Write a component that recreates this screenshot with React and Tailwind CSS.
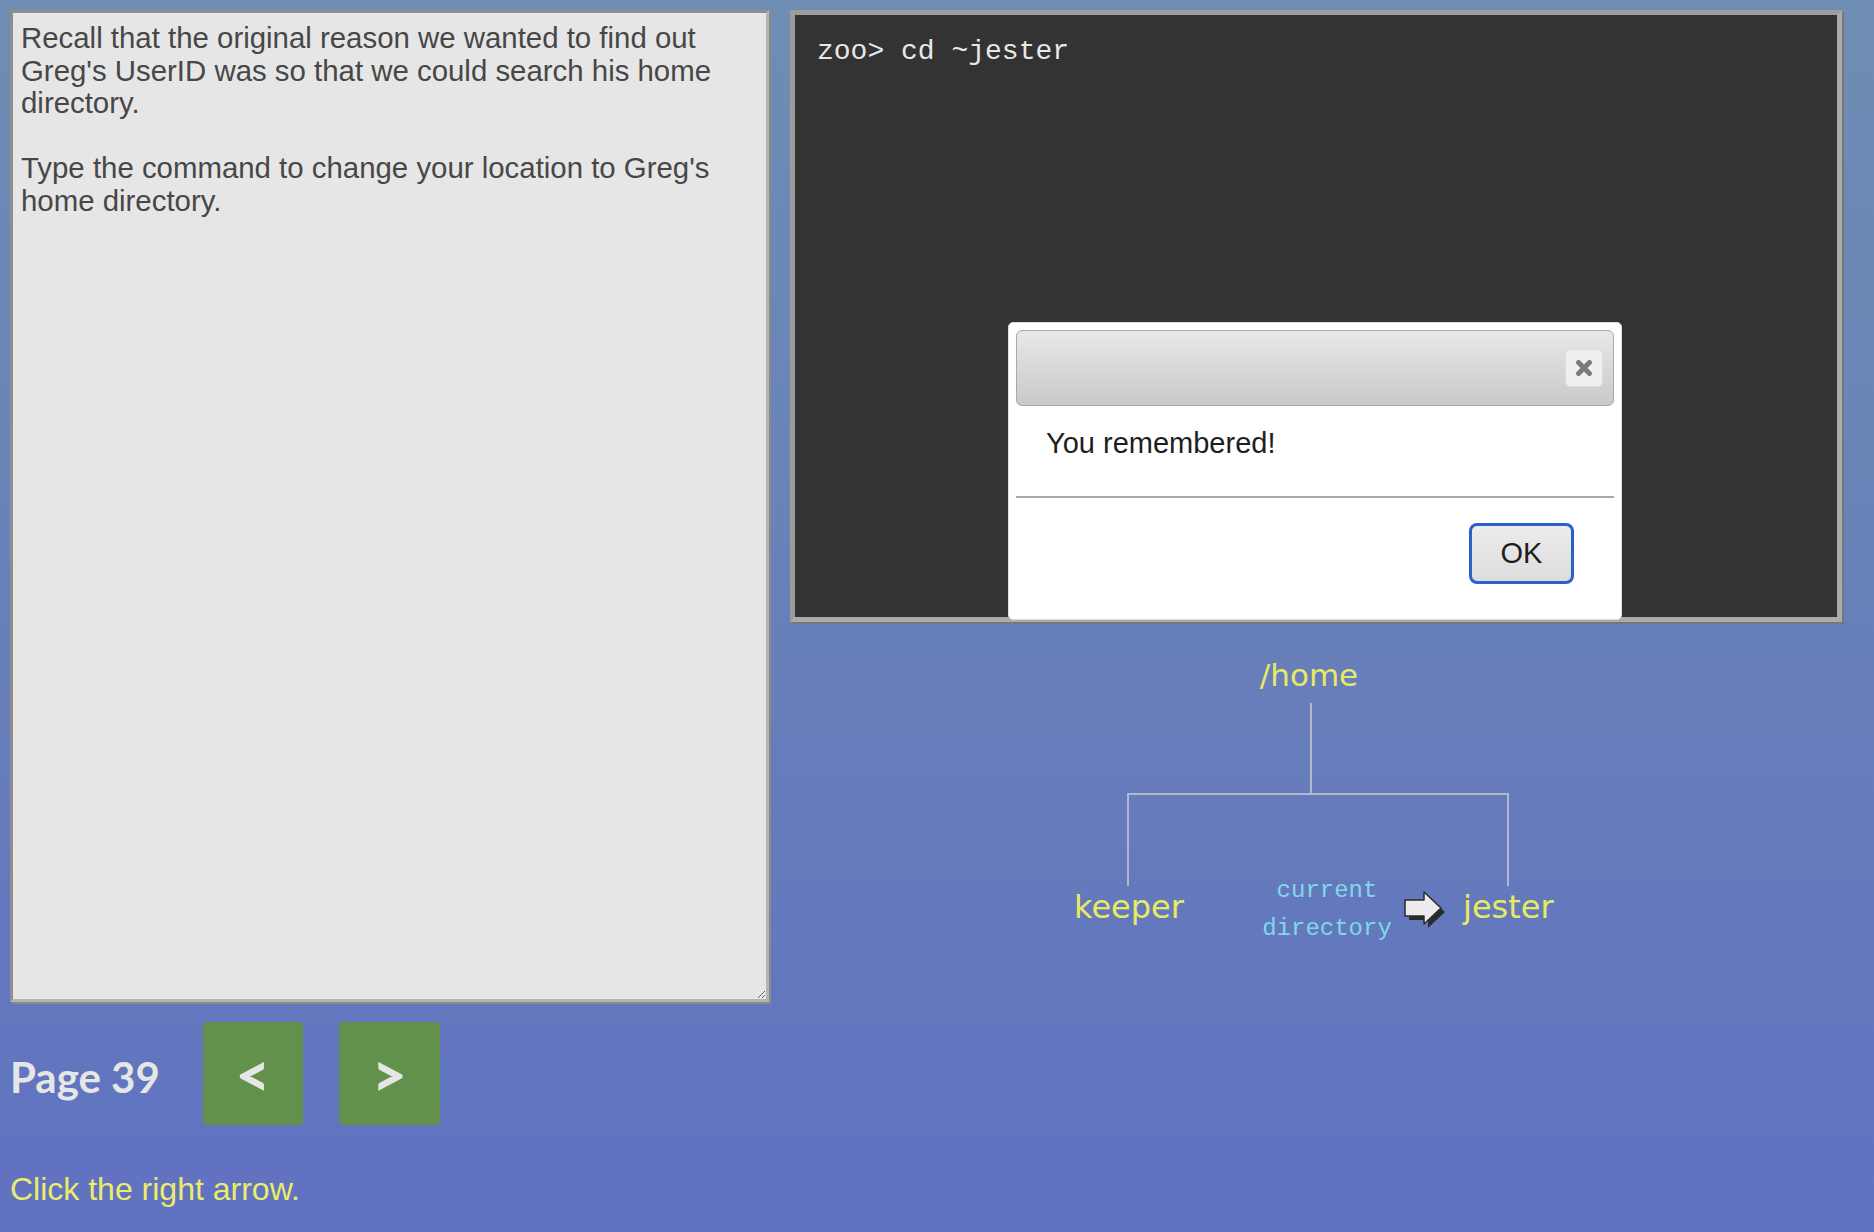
import React from 'react';

const LESSON_TEXT =
  "Recall that the original reason we wanted to find out Greg's UserID was so that we could search his home directory.\n\nType the command to change your location to Greg's home directory.";

function CloseIcon() {
  return (
    <svg width="20" height="20" viewBox="0 0 20 20">
      <path d="M4.5 4.5 L15.5 15.5 M15.5 4.5 L4.5 15.5" stroke="#7a7a7a" strokeWidth="5" strokeLinecap="round" />
    </svg>
  );
}

function PointerArrow() {
  return (
    <svg width="46" height="44" viewBox="0 0 46 44">
      <path d="M6 15 H25 V7 L42 23 L25 39 V31 H6 Z" fill="#2b2b2b" />
      <path d="M2 11 H21 V3 L38 19 L21 35 V27 H2 Z" fill="#ececec" stroke="#2b2b2b" strokeWidth="1.5" strokeLinejoin="round" />
    </svg>
  );
}

function TreeDiagram() {
  return (
    <div className="relative h-[360px] w-full">
      <svg className="absolute left-0 top-0" width="1052" height="300">
        <g stroke="#b4b8cc" strokeWidth="2" fill="none">
          <line x1="521" y1="81" x2="521" y2="172" />
          <line x1="338" y1="172" x2="718" y2="172" />
          <line x1="338" y1="171" x2="338" y2="264" />
          <line x1="718" y1="171" x2="718" y2="264" />
        </g>
      </svg>
      <div className="absolute left-[519px] top-[38px] -translate-x-1/2 text-[31px] leading-none text-[#e8ea62] font-['DejaVu_Sans',sans-serif]">
        /home
      </div>
      <div className="absolute left-[339px] top-[269px] -translate-x-1/2 text-[32px] leading-none text-[#e8ea62] font-['DejaVu_Sans',sans-serif]">
        keeper
      </div>
      <div className="absolute left-[537px] top-[257px] -translate-x-1/2 flex flex-col items-center gap-[14px] text-[24px] leading-none text-[#7fd8e8] font-['Liberation_Mono',monospace]">
        <span>current</span>
        <span>directory</span>
      </div>
      <div className="absolute left-[613px] top-[267px]">
        <PointerArrow />
      </div>
      <div className="absolute left-[673px] top-[269px] text-[32px] leading-none text-[#e8ea62] font-['DejaVu_Sans',sans-serif]">
        jester
      </div>
    </div>
  );
}

function AlertDialog() {
  return (
    <div className="absolute left-[1008px] top-[322px] w-[614px] h-[298px] bg-white rounded-[5px] border border-[#dcdcdc] p-[7px] flex flex-col font-['Liberation_Sans',Arial,sans-serif]">
      <div className="h-[76px] shrink-0 rounded-[6px] border border-[#a9a9a9] bg-linear-to-b from-[#e8e8e8] to-[#c9c9c9] flex items-center justify-end pr-[10px]">
        <button className="w-[38px] h-[38px] rounded-[5px] bg-[#efefef] border border-[#dedede] flex items-center justify-center">
          <CloseIcon />
        </button>
      </div>
      <div className="h-[90px] shrink-0 pl-[30px] pt-[16px] text-[29px] text-[#1e1e1e]">
        You remembered!
      </div>
      <div className="h-[2px] shrink-0 bg-[#a9a9a9]" />
      <div className="flex justify-end pt-[25px] pr-[40px]">
        <button className="w-[105px] h-[61px] rounded-[8px] border-[3px] border-[#2b60cb] bg-linear-to-b from-[#ececec] to-[#dcdcdc] text-[29px] text-[#1e1e1e] flex items-center justify-center">
          OK
        </button>
      </div>
    </div>
  );
}

export default function App() {
  return (
    <div className="relative w-[1874px] h-[1232px] overflow-hidden bg-linear-to-b from-[#6e8eb3] via-[#6880b9] to-[#6071c1] flex gap-[21px] pl-[10px] pt-[10px]">
      {/* Left column: lesson text + paging */}
      <div className="w-[759px] shrink-0 flex flex-col">
        <textarea
          readOnly
          defaultValue={LESSON_TEXT}
          className="w-[759px] h-[992px] bg-[#e6e6e6] border-[3px] border-t-[#8e8e8e] border-l-[#8e8e8e] border-r-[#b4b4b4] border-b-[#b4b4b4] shadow-[2px_2px_0_#8a8a8a] pl-[8px] pr-[6px] pt-[9px] text-[29.4px] leading-[32.5px] text-[#474747] font-['Liberation_Sans',Arial,sans-serif] outline-none"
        />
        <div className="flex items-start mt-[20px]">
          <div className="mt-[30px] text-[42px] font-bold text-[#e6e6e6] font-['Lato',sans-serif] leading-[1.2]">
            Page 39
          </div>
          <button className="ml-[43px] w-[100px] h-[103px] rounded-[4px] bg-[#62914c] text-[60px] font-black text-[#e6e6e6] font-['Lato',sans-serif] flex items-center justify-center leading-none">
            &lt;
          </button>
          <button className="ml-[36px] w-[101px] h-[103px] rounded-[4px] bg-[#62914c] text-[60px] font-black text-[#e6e6e6] font-['Lato',sans-serif] flex items-center justify-center leading-none">
            &gt;
          </button>
        </div>
        <div className="mt-[46px] text-[32px] text-[#ecec6c] font-['Liberation_Sans',Arial,sans-serif] leading-[1.15]">
          Click the right arrow.
        </div>
      </div>

      {/* Right column: terminal + diagram */}
      <div className="w-[1052px] shrink-0 flex flex-col">
        <div className="h-[612px] bg-[#333333] border-[5px] border-t-[#9c9c9c] border-l-[#9c9c9c] border-r-[#ababab] border-b-[#ababab] shadow-[2px_2px_0_#777777] pl-[22px] pt-[16px]">
          <div className="text-[28px] text-[#e8e8e8] font-['Liberation_Mono','Courier_New',monospace] whitespace-pre">
            zoo&gt; cd ~jester
          </div>
        </div>
        <TreeDiagram />
      </div>

      <AlertDialog />
    </div>
  );
}
